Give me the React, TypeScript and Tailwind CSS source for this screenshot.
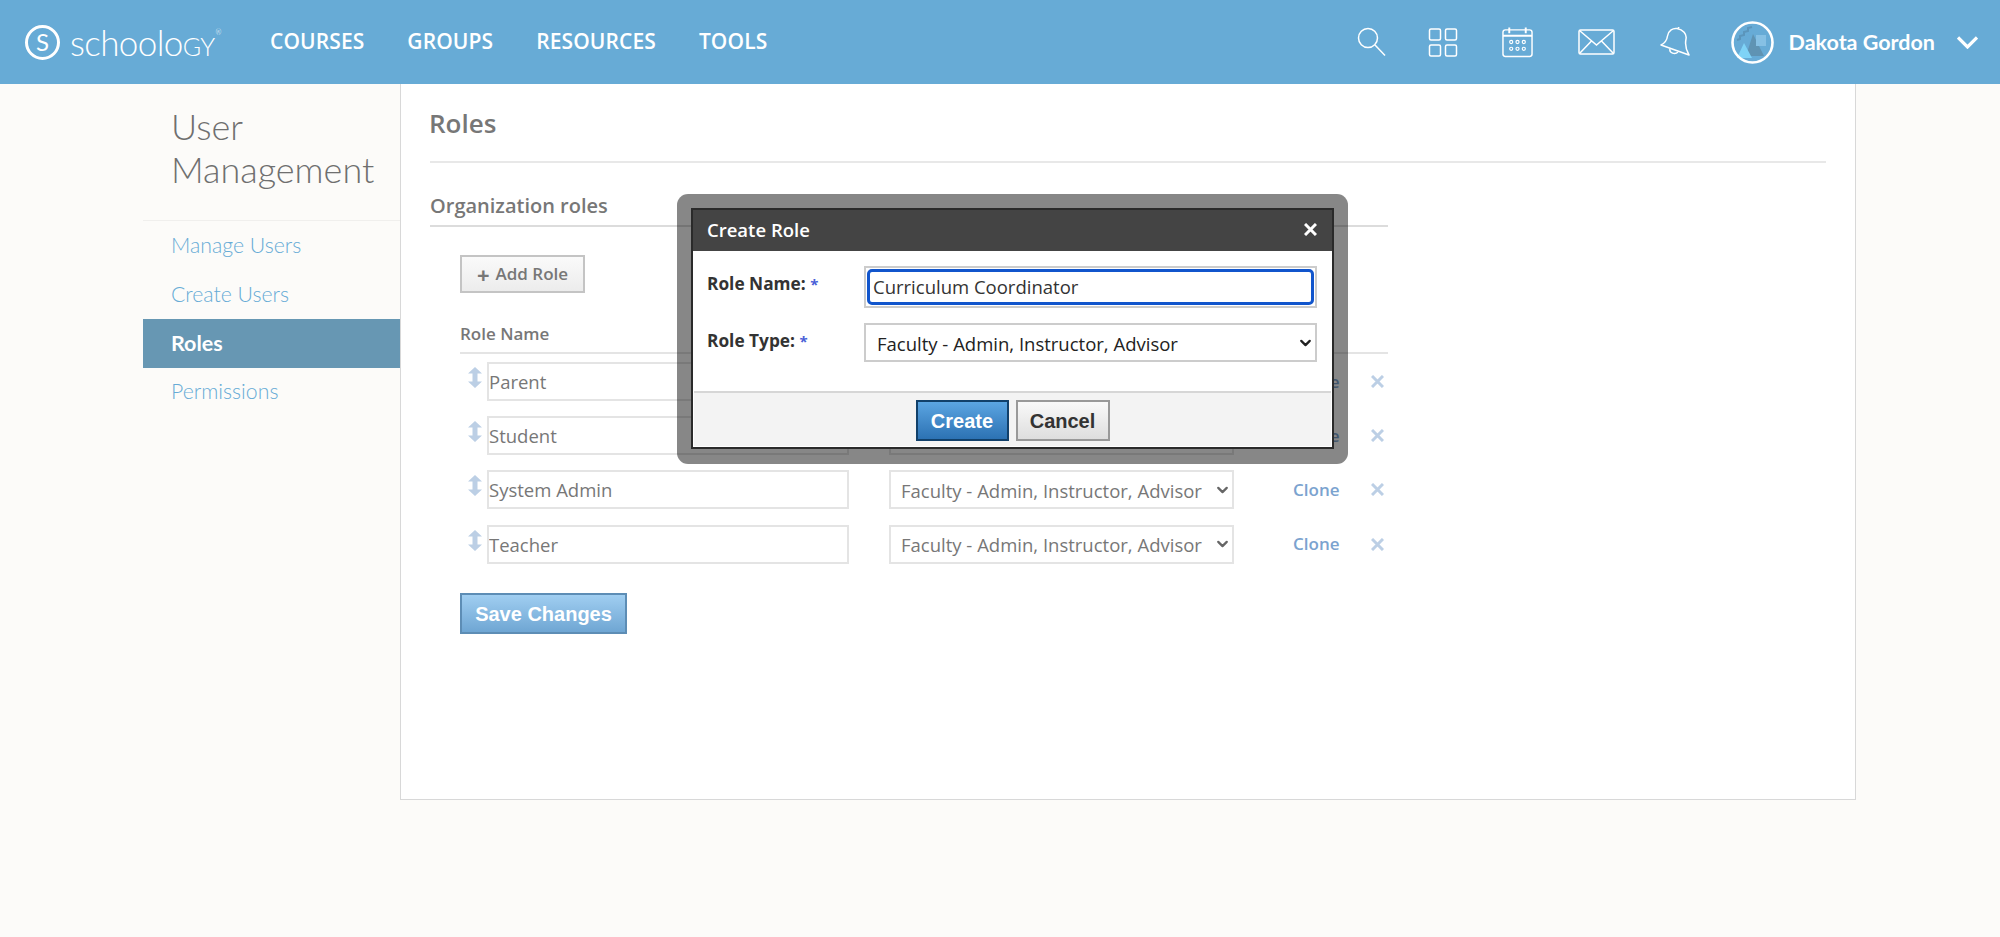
import { ChevronDown } from "lucide-react"

const ROLES = ["Parent", "Student", "System Admin", "Teacher"]
const FACULTY = "Faculty - Admin, Instructor, Advisor"

function Header() {
  return (
    <header className="flex h-[84px] items-center bg-[#67abd6] text-white">
      <div className="ml-[25px] flex h-[35px] w-[35px] items-center justify-center rounded-full border-[3px] border-white font-['Lato',sans-serif] text-[24px] leading-none">
        S
      </div>
      <div className="ml-[10px] flex w-[165px] font-['Lato',sans-serif] text-[35px] font-light leading-none tracking-[-0.6px]">
        schoolo<span className="[font-variant:small-caps]">gy</span>
        <span className="ml-[1px] mt-[4px] text-[7px]">®</span>
      </div>
      <nav className="ml-[35px] flex gap-[43px] font-['Open_Sans',sans-serif] text-[21px] font-semibold tracking-[0.1px]">
        <span>COURSES</span>
        <span>GROUPS</span>
        <span>RESOURCES</span>
        <span>TOOLS</span>
      </nav>
      <div className="ml-auto flex items-center">
        <svg className="h-[30px] w-[30px]" viewBox="0 0 30 30" fill="none" stroke="white" strokeWidth="1.5">
          <circle cx="11" cy="11" r="9.5" />
          <path d="M18 18l10 10.5" />
        </svg>
        <svg className="ml-[41px] h-[30px] w-[30px]" viewBox="0 0 30 30" fill="none" stroke="white" strokeWidth="1.5">
          <rect x="1.5" y="2" width="11" height="11" rx="1.5" />
          <rect x="17.5" y="2" width="11" height="11" rx="1.5" />
          <rect x="1.5" y="18" width="11" height="11" rx="1.5" />
          <rect x="17.5" y="18" width="11" height="11" rx="1.5" />
        </svg>
        <svg className="ml-[44px] h-[32px] w-[31px]" viewBox="0 0 32 32" fill="none" stroke="white" strokeWidth="1.5">
          <rect x="1" y="3.5" width="30" height="27.5" rx="2.5" />
          <path d="M1 9.5h30M7.5 1v6M24.5 1v6" strokeWidth="2" />
          <circle cx="9.5" cy="16" r="1.6" strokeWidth="1.2" />
          <circle cx="16" cy="16" r="1.6" strokeWidth="1.2" />
          <circle cx="22.5" cy="16" r="1.6" strokeWidth="1.2" />
          <circle cx="9.5" cy="23" r="1.6" strokeWidth="1.2" />
          <circle cx="16" cy="23" r="1.6" strokeWidth="1.2" />
          <circle cx="22.5" cy="23" r="1.6" strokeWidth="1.2" />
        </svg>
        <svg className="ml-[45px] h-[26px] w-[37px]" viewBox="0 0 37 26" fill="none" stroke="white" strokeWidth="1.5">
          <rect x="1" y="1" width="35" height="24" rx="1.5" />
          <path d="M1.5 1.5L18.5 16 35.5 1.5M13.5 12L1.5 24.5M23.5 12l12 12.5" />
        </svg>
        <svg className="ml-[45px] h-[30px] w-[30px]" viewBox="0 0 30 30" fill="none" stroke="white" strokeWidth="1.5" strokeLinejoin="round">
          <path d="M1 18C5 16 7 13 7.5 9 8.500 3 13 1 17 1.500 23 2.500 27 7 26 12 25 17 26 23 29 28z" />
          <path d="M18 1.500L19 0M10 22c-1 4 5 6 8 3" />
        </svg>
        <svg className="ml-[41px] h-[43px] w-[43px]" viewBox="0 0 43 43" fill="none">
          <circle cx="21.5" cy="21.5" r="20" fill="#67abd6" />
          <path d="M6 19l3-1v-3l4-1v-3l4-1V7l4-1" stroke="#5b95bb" strokeWidth="2" />
          <path d="M22 13l11 22H15z" fill="#5f93b3" />
          <rect x="25" y="14" width="10" height="11" fill="#86c0e4" />
          <path d="M13 22l8 15H6z" fill="#7fd3f7" />
          <circle cx="21.5" cy="21.5" r="20" stroke="white" strokeWidth="2.6" />
        </svg>
        <span className="ml-[15px] font-['Lato',sans-serif] text-[21.5px] font-bold">Dakota Gordon</span>
        <svg className="ml-[22px] mr-[22px] h-[13px] w-[21px]" viewBox="0 0 21 13" fill="none" stroke="white" strokeWidth="3.2">
          <path d="M1 1.500l9.500 9.500L20 1.500" />
        </svg>
      </div>
    </header>
  )
}

function Sidebar() {
  const links = ["Manage Users", "Create Users", "Roles", "Permissions"]
  return (
    <aside className="ml-[143px] w-[257px] font-['Lato',sans-serif]">
      <h1 className="h-[137px] border-b-[1px] border-[#f0efed] pl-[28px] pt-[21px] text-[36px] font-light leading-[43px] text-[#6f6f6f]">
        User
        <br />
        Management
      </h1>
      <ul className="mt-[1px]">
        {links.map((link) =>
          link === "Roles" ? (
            <li key={link} className="flex h-[48.5px] items-center bg-[#6797b3] pl-[28px] text-[21.5px] font-bold text-white">
              {link}
            </li>
          ) : (
            <li key={link} className="flex h-[48.5px] items-center pl-[28px] text-[21.25px] font-light text-[#67abd6]">
              {link}
            </li>
          ),
        )}
      </ul>
    </aside>
  )
}

function FacultySelect({ className, arrowClassName }: { className: string; arrowClassName: string }) {
  return (
    <div className="relative h-full">
      <select defaultValue={FACULTY} className={`h-full appearance-none border-2 bg-white pt-[2px] ${className}`}>
        <option>{FACULTY}</option>
      </select>
      <ChevronDown
        className={`pointer-events-none absolute right-[3px] top-1/2 h-[17px] w-[17px] -translate-y-1/2 ${arrowClassName}`}
        strokeWidth={3.2}
      />
    </div>
  )
}

function RoleRow({ name }: { name: string }) {
  return (
    <div className="flex h-[39px] items-center">
      <div className="flex h-full w-[27px] justify-center pl-[3px] pt-[5px]">
        <svg className="h-[21px] w-[14px]" viewBox="0 0 14 21" fill="#bccfe5">
          <path d="M7 0l7 6.500H9.500v8H14L7 21 0 14.500h4.500v-8H0z" />
        </svg>
      </div>
      <input
        readOnly
        value={name}
        className="h-full w-[362px] border-2 border-[#e4e4e4] bg-white pl-[0px] text-[18.5px] text-[#777]"
      />
      <div className="ml-[40px] h-[39px]">
        <FacultySelect
          className="w-[345px] border-[#e4e4e4] pl-[10px] text-[18.500px] text-[#777]"
          arrowClassName="text-[#666]"
        />
      </div>
      <span className="ml-[59px] w-[78px] text-[17px] font-semibold text-[#7ba3cf]">Clone</span>
      <svg className="h-[13px] w-[13px]" viewBox="0 0 13 13" stroke="#bccfe5" strokeWidth="3">
        <path d="M1 1l11 11M12 1L1 12" />
      </svg>
    </div>
  )
}

function CreateRoleModal() {
  return (
    <div className="absolute left-[677px] top-[194px] h-[270px] w-[671px] rounded-[11px] bg-black/[0.47] p-[14px] font-['Open_Sans',sans-serif]">
      <div className="flex h-[241px] w-[643px] flex-col border-2 border-[#2a2a2a] bg-white">
        <div className="flex h-[41px] items-center justify-between bg-[#444] pb-[2px] pl-[14px] pr-[15px] text-[18.500px] font-semibold text-white">
          <span>Create Role</span>
          <svg className="h-[13px] w-[13px]" viewBox="0 0 13 13" stroke="white" strokeWidth="3">
            <path d="M1 1l11 11M12 1L1 12" />
          </svg>
        </div>
        <div className="flex-1 pl-[14px] pr-[14px] pt-[15px]">
          <div className="flex">
            <label className="w-[157px] pt-[5px] text-[17.3px] font-bold leading-[26px] text-[#333]">
              Role Name: <span className="align-top text-[15px] text-[#4a5fd8]">*</span>
            </label>
            <div className="h-[42px] w-[453px] border-2 border-[#ccc] p-[1px]">
              <input
                readOnly
                value="Curriculum Coordinator"
                className="h-full w-full rounded-[5px] border-[3px] border-[#1155cc] pb-[2px] pl-[3px] text-[18.500px] text-[#333] outline-none"
              />
            </div>
          </div>
          <div className="mt-[15px] flex">
            <label className="w-[157px] pt-[5px] text-[17.3px] font-bold leading-[26px] text-[#333]">
              Role Type: <span className="align-top text-[15px] text-[#4a5fd8]">*</span>
            </label>
            <div className="h-[39px]">
              <FacultySelect
                className="w-[453px] border-[#ccc] pl-[11px] text-[18.500px] text-[#222]"
                arrowClassName="text-[#222]"
              />
            </div>
          </div>
        </div>
        <div className="mx-[1px] mb-[1px] flex h-[55px] justify-center gap-[7px] border-t-2 border-[#d6d6d6] bg-[#f3f3f3] pt-[7px] font-['Liberation_Sans',sans-serif] text-[20px] font-bold">
          <button className="h-[41px] w-[93px] border-2 border-[#11406a] bg-gradient-to-b from-[#5ba5e2] to-[#2c72b3] text-white">
            Create
          </button>
          <button className="h-[41px] w-[94px] border-2 border-[#999] bg-gradient-to-b from-[#f9f9f9] to-[#dedede] text-[#333]">
            Cancel
          </button>
        </div>
      </div>
    </div>
  )
}

export default function App() {
  return (
    <div className="relative min-h-[937px] bg-[#fcfbf9] font-['Open_Sans',sans-serif]">
      <Header />
      <div className="flex">
        <Sidebar />
        <main className="h-[716px] w-[1456px] border-x border-b border-[#d8d8d8] bg-white px-[29px]">
          <h2 className="flex h-[79px] items-center border-b-2 border-[#e8e8e8] pt-[2px] text-[26px] font-semibold text-[#777]">
            <span className="-ml-[1px]">Roles</span>
          </h2>
          <div className="w-[958px]">
            <h3 className="flex h-[64px] items-end border-b-2 border-[#dcdcdc] pb-[4px] text-[20px] font-semibold text-[#777]">
              Organization roles
            </h3>
            <div className="pl-[30px]">
              <button className="mt-[28px] flex h-[38px] w-[125px] items-center justify-center gap-[6px] border-2 border-[#c4c4c4] bg-gradient-to-b from-[#fafafa] to-[#ececec] text-[17px] font-semibold text-[#777]">
                <span className="text-[22px] font-bold leading-none">+</span>
                Add Role
              </button>
              <div className="flex h-[61px] items-end border-b-2 border-[#e4e4e4] pb-[6px] text-[17px] font-semibold text-[#777]">
                Role Name
              </div>
              <div className="mt-[8px] flex flex-col gap-[15.2px]">
                {ROLES.map((role) => (
                  <RoleRow key={role} name={role} />
                ))}
              </div>
              <button className="mt-[29px] h-[41px] w-[167px] border-2 border-[#5d8db5] bg-gradient-to-b from-[#a0cef1] to-[#6fa6d3] pt-[1px] font-['Liberation_Sans',sans-serif] text-[20px] font-bold text-white">
                Save Changes
              </button>
            </div>
          </div>
        </main>
      </div>
      <CreateRoleModal />
    </div>
  )
}
